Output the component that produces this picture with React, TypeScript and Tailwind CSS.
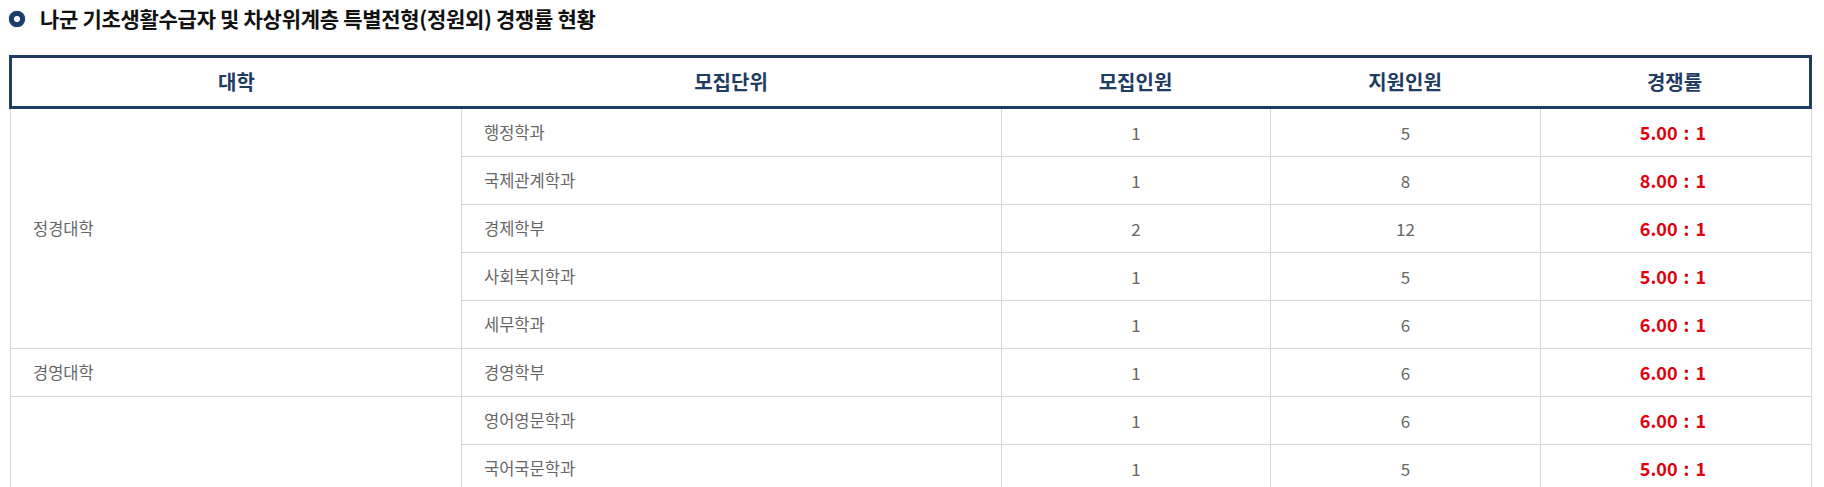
type Row = {
  dept: string;
  quota: number;
  applicants: number;
  ratio: string;
};

type Group = {
  college: string;
  rows: Row[];
};

// 세 번째 대학명은 화면 아래쪽에 있어 보이지 않는다
const groups: Group[] = [
  {
    college: '정경대학',
    rows: [
      { dept: '행정학과', quota: 1, applicants: 5, ratio: '5.00 : 1' },
      { dept: '국제관계학과', quota: 1, applicants: 8, ratio: '8.00 : 1' },
      { dept: '경제학부', quota: 2, applicants: 12, ratio: '6.00 : 1' },
      { dept: '사회복지학과', quota: 1, applicants: 5, ratio: '5.00 : 1' },
      { dept: '세무학과', quota: 1, applicants: 6, ratio: '6.00 : 1' },
    ],
  },
  {
    college: '경영대학',
    rows: [{ dept: '경영학부', quota: 1, applicants: 6, ratio: '6.00 : 1' }],
  },
  {
    college: '',
    rows: [
      { dept: '영어영문학과', quota: 1, applicants: 6, ratio: '6.00 : 1' },
      { dept: '국어국문학과', quota: 1, applicants: 5, ratio: '5.00 : 1' },
    ],
  },
];

const rowSpan: Record<number, string> = {
  1: 'row-span-1',
  2: 'row-span-2',
  3: 'row-span-3',
  4: 'row-span-4',
  5: 'row-span-5',
};

const cell = 'border-r border-b border-[#d6d6d6] flex items-center';

const App = () => {
  return (
    <div className="w-[1824px] h-[487px] overflow-hidden bg-white font-['Noto_Sans_CJK_KR','Noto_Sans',sans-serif]">
      {/* Title */}
      <div className="flex items-center h-[38px] pl-[9px]">
        <span className="w-[16px] h-[16px] rounded-full border-[5px] border-[#1d3d6b] bg-white shadow-[0_0_1px_#1d3d6b]" />
        <h2 className="ml-[15px] text-[21px] font-bold text-[#111] tracking-[-0.3px]">
          나군 기초생활수급자 및 차상위계층 특별전형(정원외) 경쟁률 현황
        </h2>
      </div>

      {/* Table */}
      <div className="mx-[9px] mt-[17px] w-[1803px]">
        <div className="grid grid-cols-[449px_540px_269px_270px_269px] h-[54px] border-[3px] border-[#1f3c63] text-[20px] font-bold text-[#1f3c63]">
          <div className="flex items-center justify-center">대학</div>
          <div className="flex items-center justify-center">모집단위</div>
          <div className="flex items-center justify-center">모집인원</div>
          <div className="flex items-center justify-center">지원인원</div>
          <div className="flex items-center justify-center">경쟁률</div>
        </div>

        <div className="mx-px grid grid-cols-[451px_540px_269px_270px_271px] auto-rows-[48px] border-l border-[#d6d6d6] text-[16.5px] text-[#666]">
          {groups.map((g, gi) =>
            g.rows.map((r, i) => (
              <div key={gi + r.dept} className="contents">
                {i === 0 && (
                  <div className={`${cell} ${rowSpan[g.rows.length]} pl-[22px]`}>{g.college}</div>
                )}
                <div className={`${cell} pl-[22px]`}>{r.dept}</div>
                <div className={`${cell} justify-center text-[17px]`}>{r.quota}</div>
                <div className={`${cell} justify-center text-[17px]`}>{r.applicants}</div>
                <div className={`${cell} justify-center pr-[6px] text-[18px] font-bold [word-spacing:2px] text-[#e0000f]`}>
                  {r.ratio}
                </div>
              </div>
            ))
          )}
        </div>
      </div>
    </div>
  );
};

export default App;
